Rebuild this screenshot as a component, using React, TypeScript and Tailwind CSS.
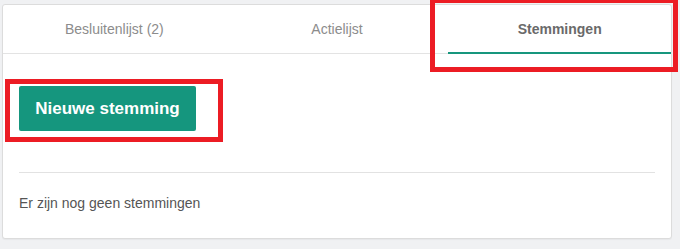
const TABS = [
  { label: "Besluitenlijst (2)", active: false },
  { label: "Actielijst", active: false },
  { label: "Stemmingen", active: true },
];

export default function App() {
  return (
    <div className="relative h-[249px] w-[680px] overflow-hidden bg-[#f0f1f3] pl-[2px] pt-[4px] font-['Liberation_Sans',Arial,sans-serif]">
      <div className="flex h-[235px] w-[670px] flex-col rounded-[3px] border border-[#dcdcdc] bg-white shadow-[0_1px_1px_rgba(0,0,0,0.04)]">
        <div className="flex h-[49px] border-b border-[#e3e3e3]">
          {TABS.map((tab) => (
            <div
              key={tab.label}
              className={
                tab.active
                  ? "-mb-px flex flex-1 items-center justify-center border-b-2 border-[#16967d] pt-[1px] text-[14px] font-bold text-[#6a6a6a]"
                  : "flex flex-1 items-center justify-center text-[14px] text-[#8c8c8c]"
              }
            >
              {tab.label}
            </div>
          ))}
        </div>

        <div className="flex flex-col px-4 pt-[32px]">
          <button className="flex h-[45px] w-[177px] items-center justify-center rounded-[2px] bg-[#15967e] text-[17px] font-bold text-white">
            Nieuwe stemming
          </button>
          <div className="mt-[41px] border-t border-[#e2e2e2]" />
          <p className="mt-[20px] text-[14px] leading-[20px] text-[#555555]">
            Er zijn nog geen stemmingen
          </p>
        </div>
      </div>

      {/* annotation boxes */}
      <div className="pointer-events-none absolute left-[430px] top-[-2px] h-[74px] w-[248px] border-[5px] border-[#ec1c24]" />
      <div className="pointer-events-none absolute left-[5px] top-[79px] h-[63px] w-[218px] border-[5px] border-[#ec1c24]" />
    </div>
  );
}
